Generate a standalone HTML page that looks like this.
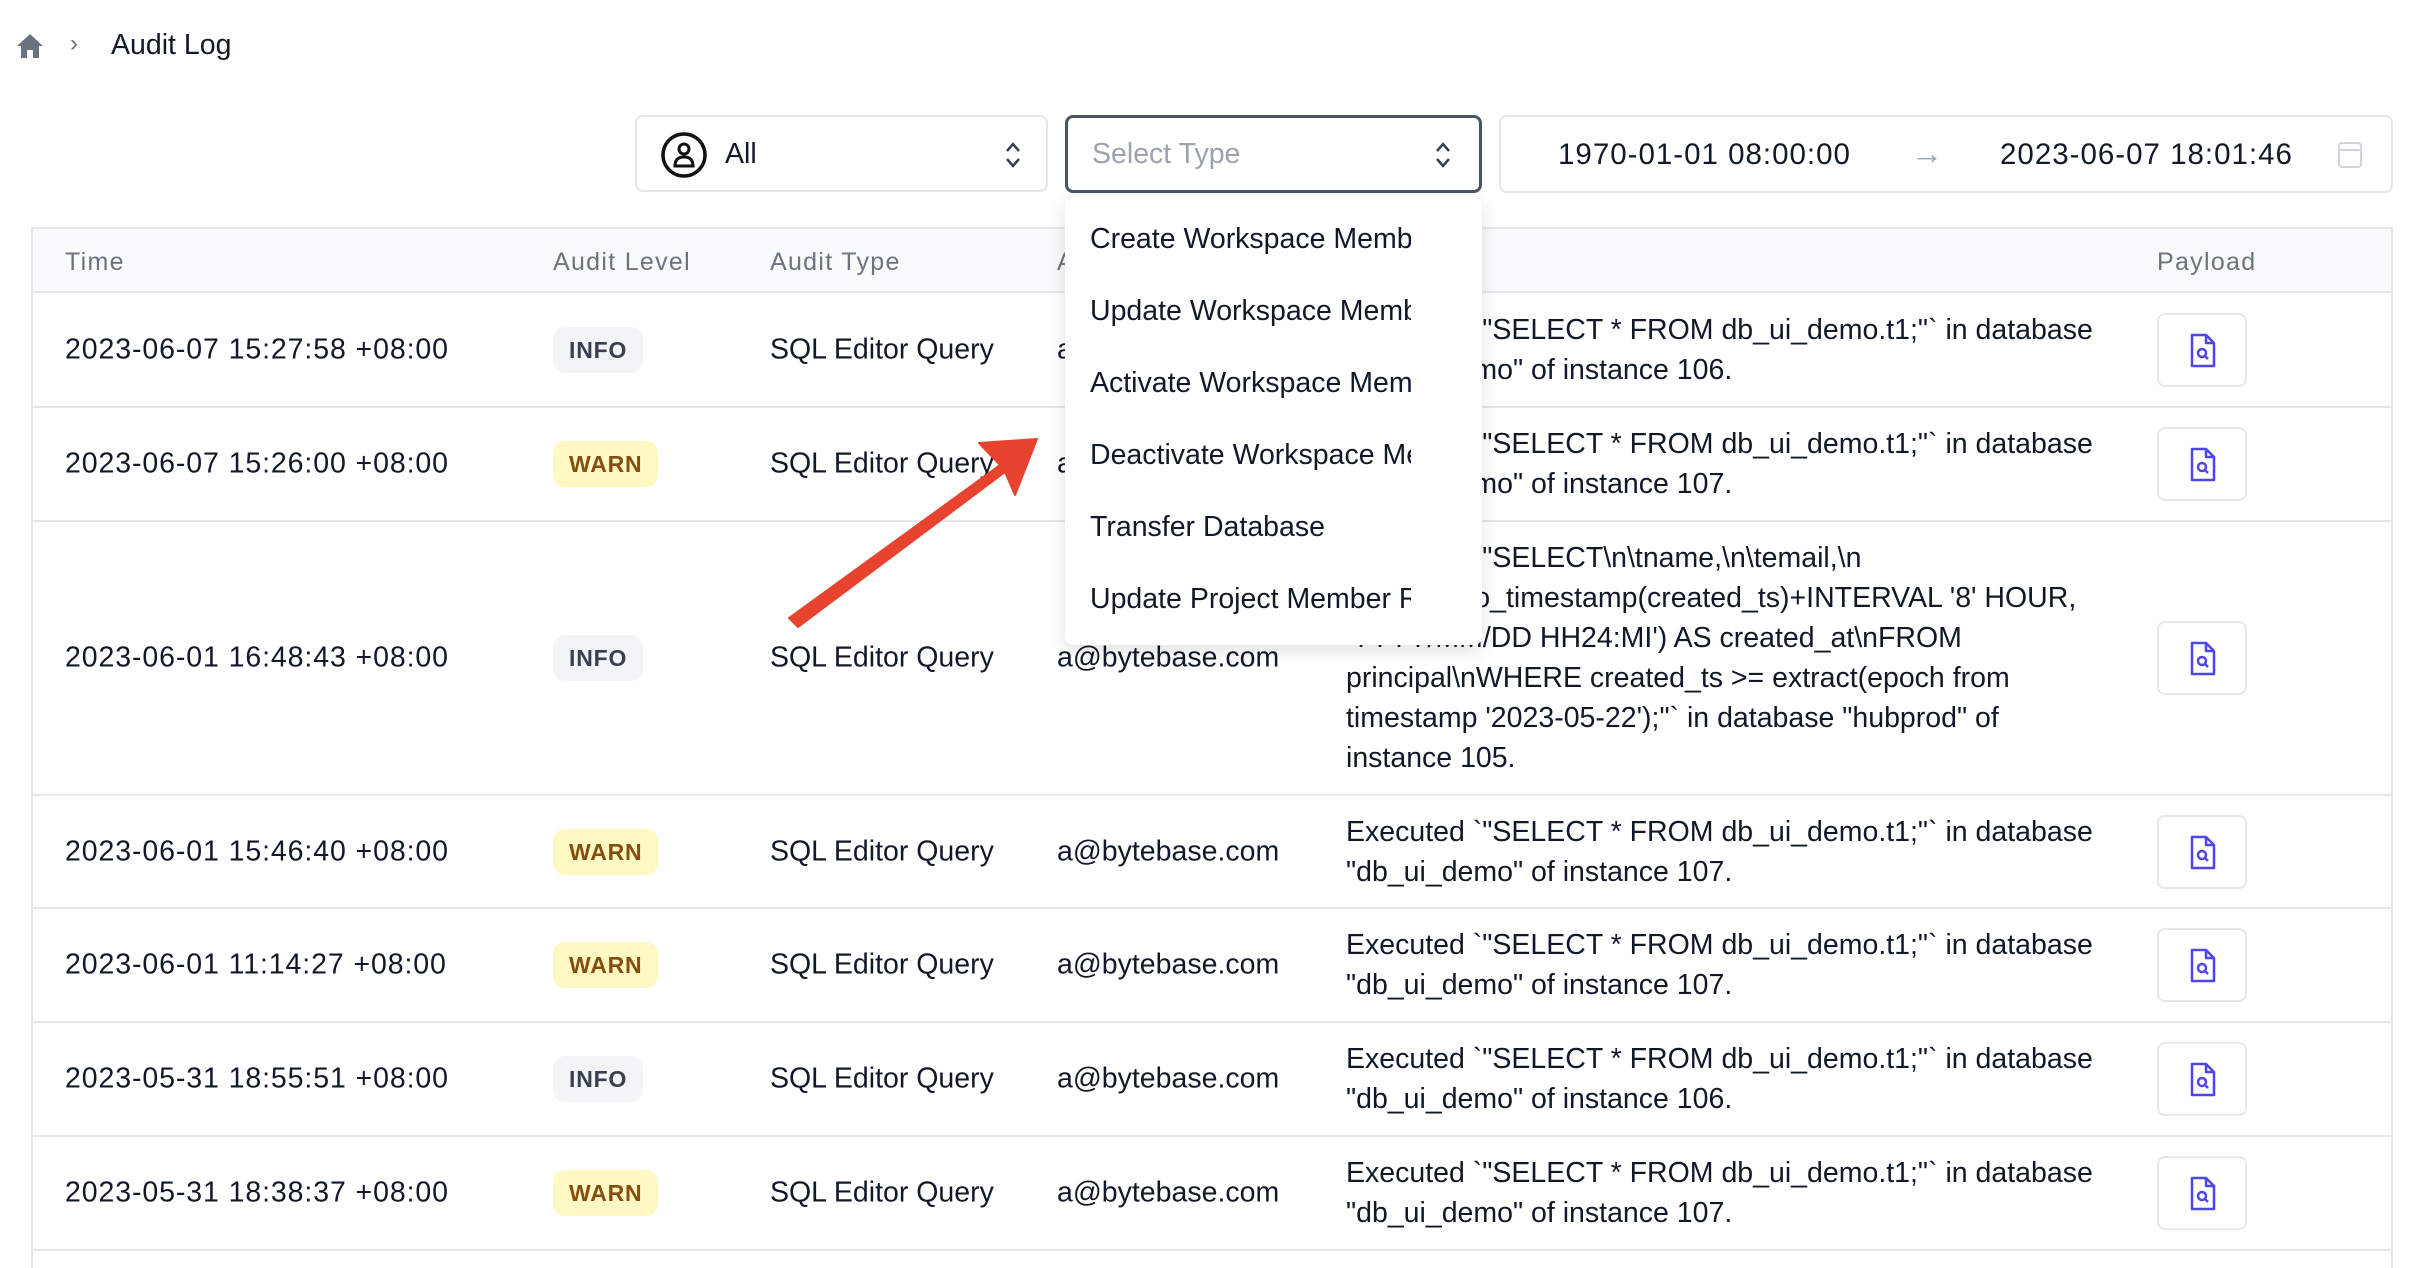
<!DOCTYPE html>
<html><head><meta charset="utf-8"><style>
*{box-sizing:border-box;margin:0;padding:0}
body{width:2410px;height:1268px;background:#fff;font-family:"Liberation Sans",sans-serif;color:#111827;position:relative;overflow:hidden}
.a{position:absolute}
.box{position:absolute;border:2px solid #e5e7eb;border-radius:8px;background:#fff}
.hdr{position:absolute;left:31px;top:227px;width:2362px;height:66px;background:#f9fafb;border-top:2px solid #e5e7eb;border-bottom:2px solid #e5e7eb}
.h{position:absolute;top:19px;font-size:25px;color:#6b7280;letter-spacing:1.3px}
.row{position:absolute;left:31px;width:2362px;border-bottom:2px solid #e5e7eb}
.c{position:absolute;font-size:28.5px;white-space:nowrap;transform:translateY(-50%)}
.t{letter-spacing:0.9px}
.b{position:absolute;transform:translateY(-50%);height:46px;border-radius:12px;font-size:23px;font-weight:bold;line-height:46px;padding:0 16px;letter-spacing:0.8px}
.info{background:#f3f4f6;color:#374151}
.warn{background:#fef9c3;color:#854d0e}
.pb{position:absolute;left:2126px;width:90px;height:74px;border:2px solid #e5e7eb;border-radius:8px;transform:translateY(-50%);background:#fff}
.cm{position:absolute;left:1315px;font-size:28.5px;line-height:40px;white-space:nowrap;transform:translateY(-50%)}
.dd{position:absolute;left:1065px;top:197px;width:417px;height:448px;background:#fff;border-radius:8px;box-shadow:0 6px 18px rgba(0,0,0,0.12);overflow:hidden}
.it{position:absolute;left:25px;width:321px;overflow:hidden;white-space:nowrap;font-size:28.5px;color:#111827}
</style></head><body>
<svg class="a" style="left:16px;top:33px" width="28" height="26" viewBox="0 0 28 26"><path d="M14 1 L27 13 L23 13 L23 25 L17 25 L17 17 L11 17 L11 25 L5 25 L5 13 L1 13 Z" fill="#6b7280"/></svg>
<div class="a" style="left:70px;top:30px;font-size:24px;color:#6b7280">›</div>
<div class="a" style="left:111px;top:29px;font-size:28.5px;color:#111827">Audit Log</div>

<div class="box" style="left:635px;top:115px;width:413px;height:77px">
<svg class="a" style="left:23px;top:14px" width="48" height="48" viewBox="0 0 48 48"><circle cx="24" cy="24" r="21" fill="none" stroke="#111" stroke-width="3.5"/><circle cx="24" cy="18" r="5" fill="none" stroke="#111" stroke-width="3"/><path d="M15 35 Q15 26 24 26 Q33 26 33 35 Z" fill="none" stroke="#111" stroke-width="3"/></svg>
<div class="a" style="left:88px;top:21px;font-size:28.5px">All</div>
<svg class="a" style="left:367px;top:24px" width="18" height="28" viewBox="0 0 18 28"><path d="M3 10 L9 3 L15 10 M3 18 L9 25 L15 18" fill="none" stroke="#374151" stroke-width="2.5"/></svg>
</div>
<div class="box" style="left:1065px;top:115px;width:417px;height:78px;border:3px solid #4b5563">
<div class="a" style="left:24px;top:20px;font-size:28.5px;color:#9ca3af">Select Type</div>
<svg class="a" style="left:366px;top:23px" width="18" height="28" viewBox="0 0 18 28"><path d="M3 10 L9 3 L15 10 M3 18 L9 25 L15 18" fill="none" stroke="#374151" stroke-width="2.5"/></svg>
</div>
<div class="box" style="left:1499px;top:115px;width:894px;height:78px">
<div class="a" style="left:57px;top:21px;font-size:29.5px;letter-spacing:1px">1970-01-01 08:00:00</div>
<div class="a" style="left:410px;top:18px;font-size:32px;color:#9ca3af">→</div>
<div class="a" style="left:499px;top:21px;font-size:29.5px;letter-spacing:1px">2023-06-07 18:01:46</div>
<svg class="a" style="left:836px;top:24px" width="26" height="28" viewBox="0 0 26 28"><rect x="2" y="2" width="22" height="24" rx="3" fill="none" stroke="#d1d5db" stroke-width="2"/><line x1="2" y1="9" x2="24" y2="9" stroke="#d1d5db" stroke-width="2"/></svg>
</div>

<div class="hdr">
<div class="h" style="left:34px">Time</div>
<div class="h" style="left:522px">Audit Level</div>
<div class="h" style="left:739px">Audit Type</div>
<div class="h" style="left:1026px">Actor</div>
<div class="h" style="left:1315px">Comment</div>
<div class="h" style="left:2126px">Payload</div>
</div>

<div class="row" style="top:293px;height:115px">
<div class="c t" style="left:34px;top:57px">2023-06-07 15:27:58 +08:00</div>
<div class="b info" style="left:522px;top:57px">INFO</div>
<div class="c" style="left:739px;top:57px">SQL Editor Query</div>
<div class="c" style="left:1026px;top:57px">a@bytebase.com</div>
<div class="cm" style="top:57px">Executed `"SELECT * FROM db_ui_demo.t1;"` in database<br>"db_ui_demo" of instance 106.</div>
<div class="pb" style="top:57px"><svg class="a" style="left:30px;top:18px" width="28" height="36" viewBox="0 0 28 36"><path d="M3 2 H17 L25 10 V33 H3 Z M17 2 V10 H25" fill="none" stroke="#4f46e5" stroke-width="2.5" stroke-linejoin="round"/><circle cx="13" cy="20" r="4" fill="none" stroke="#4f46e5" stroke-width="2.5"/><line x1="16" y1="23" x2="19" y2="26" stroke="#4f46e5" stroke-width="2.5"/></svg></div>
</div>
<div class="row" style="top:408px;height:114px">
<div class="c t" style="left:34px;top:56px">2023-06-07 15:26:00 +08:00</div>
<div class="b warn" style="left:522px;top:56px">WARN</div>
<div class="c" style="left:739px;top:56px">SQL Editor Query</div>
<div class="c" style="left:1026px;top:56px">a@bytebase.com</div>
<div class="cm" style="top:56px">Executed `"SELECT * FROM db_ui_demo.t1;"` in database<br>"db_ui_demo" of instance 107.</div>
<div class="pb" style="top:56px"><svg class="a" style="left:30px;top:18px" width="28" height="36" viewBox="0 0 28 36"><path d="M3 2 H17 L25 10 V33 H3 Z M17 2 V10 H25" fill="none" stroke="#4f46e5" stroke-width="2.5" stroke-linejoin="round"/><circle cx="13" cy="20" r="4" fill="none" stroke="#4f46e5" stroke-width="2.5"/><line x1="16" y1="23" x2="19" y2="26" stroke="#4f46e5" stroke-width="2.5"/></svg></div>
</div>
<div class="row" style="top:522px;height:274px">
<div class="c t" style="left:34px;top:136px">2023-06-01 16:48:43 +08:00</div>
<div class="b info" style="left:522px;top:136px">INFO</div>
<div class="c" style="left:739px;top:136px">SQL Editor Query</div>
<div class="c" style="left:1026px;top:136px">a@bytebase.com</div>
<div class="cm" style="top:136px">Executed `"SELECT\n\tname,\n\temail,\n<br>\tto_char(to_timestamp(created_ts)+INTERVAL '8' HOUR,<br>'YYYY/MM/DD HH24:MI') AS created_at\nFROM<br>principal\nWHERE created_ts &gt;= extract(epoch from<br>timestamp '2023-05-22');"` in database "hubprod" of<br>instance 105.</div>
<div class="pb" style="top:136px"><svg class="a" style="left:30px;top:18px" width="28" height="36" viewBox="0 0 28 36"><path d="M3 2 H17 L25 10 V33 H3 Z M17 2 V10 H25" fill="none" stroke="#4f46e5" stroke-width="2.5" stroke-linejoin="round"/><circle cx="13" cy="20" r="4" fill="none" stroke="#4f46e5" stroke-width="2.5"/><line x1="16" y1="23" x2="19" y2="26" stroke="#4f46e5" stroke-width="2.5"/></svg></div>
</div>
<div class="row" style="top:796px;height:113px">
<div class="c t" style="left:34px;top:56px">2023-06-01 15:46:40 +08:00</div>
<div class="b warn" style="left:522px;top:56px">WARN</div>
<div class="c" style="left:739px;top:56px">SQL Editor Query</div>
<div class="c" style="left:1026px;top:56px">a@bytebase.com</div>
<div class="cm" style="top:56px">Executed `"SELECT * FROM db_ui_demo.t1;"` in database<br>"db_ui_demo" of instance 107.</div>
<div class="pb" style="top:56px"><svg class="a" style="left:30px;top:18px" width="28" height="36" viewBox="0 0 28 36"><path d="M3 2 H17 L25 10 V33 H3 Z M17 2 V10 H25" fill="none" stroke="#4f46e5" stroke-width="2.5" stroke-linejoin="round"/><circle cx="13" cy="20" r="4" fill="none" stroke="#4f46e5" stroke-width="2.5"/><line x1="16" y1="23" x2="19" y2="26" stroke="#4f46e5" stroke-width="2.5"/></svg></div>
</div>
<div class="row" style="top:909px;height:114px">
<div class="c t" style="left:34px;top:56px">2023-06-01 11:14:27 +08:00</div>
<div class="b warn" style="left:522px;top:56px">WARN</div>
<div class="c" style="left:739px;top:56px">SQL Editor Query</div>
<div class="c" style="left:1026px;top:56px">a@bytebase.com</div>
<div class="cm" style="top:56px">Executed `"SELECT * FROM db_ui_demo.t1;"` in database<br>"db_ui_demo" of instance 107.</div>
<div class="pb" style="top:56px"><svg class="a" style="left:30px;top:18px" width="28" height="36" viewBox="0 0 28 36"><path d="M3 2 H17 L25 10 V33 H3 Z M17 2 V10 H25" fill="none" stroke="#4f46e5" stroke-width="2.5" stroke-linejoin="round"/><circle cx="13" cy="20" r="4" fill="none" stroke="#4f46e5" stroke-width="2.5"/><line x1="16" y1="23" x2="19" y2="26" stroke="#4f46e5" stroke-width="2.5"/></svg></div>
</div>
<div class="row" style="top:1023px;height:114px">
<div class="c t" style="left:34px;top:56px">2023-05-31 18:55:51 +08:00</div>
<div class="b info" style="left:522px;top:56px">INFO</div>
<div class="c" style="left:739px;top:56px">SQL Editor Query</div>
<div class="c" style="left:1026px;top:56px">a@bytebase.com</div>
<div class="cm" style="top:56px">Executed `"SELECT * FROM db_ui_demo.t1;"` in database<br>"db_ui_demo" of instance 106.</div>
<div class="pb" style="top:56px"><svg class="a" style="left:30px;top:18px" width="28" height="36" viewBox="0 0 28 36"><path d="M3 2 H17 L25 10 V33 H3 Z M17 2 V10 H25" fill="none" stroke="#4f46e5" stroke-width="2.5" stroke-linejoin="round"/><circle cx="13" cy="20" r="4" fill="none" stroke="#4f46e5" stroke-width="2.5"/><line x1="16" y1="23" x2="19" y2="26" stroke="#4f46e5" stroke-width="2.5"/></svg></div>
</div>
<div class="row" style="top:1137px;height:114px">
<div class="c t" style="left:34px;top:56px">2023-05-31 18:38:37 +08:00</div>
<div class="b warn" style="left:522px;top:56px">WARN</div>
<div class="c" style="left:739px;top:56px">SQL Editor Query</div>
<div class="c" style="left:1026px;top:56px">a@bytebase.com</div>
<div class="cm" style="top:56px">Executed `"SELECT * FROM db_ui_demo.t1;"` in database<br>"db_ui_demo" of instance 107.</div>
<div class="pb" style="top:56px"><svg class="a" style="left:30px;top:18px" width="28" height="36" viewBox="0 0 28 36"><path d="M3 2 H17 L25 10 V33 H3 Z M17 2 V10 H25" fill="none" stroke="#4f46e5" stroke-width="2.5" stroke-linejoin="round"/><circle cx="13" cy="20" r="4" fill="none" stroke="#4f46e5" stroke-width="2.5"/><line x1="16" y1="23" x2="19" y2="26" stroke="#4f46e5" stroke-width="2.5"/></svg></div>
</div>
<div class="a" style="left:31px;top:227px;width:2px;height:1041px;background:#e5e7eb"></div>
<div class="a" style="left:2391px;top:227px;width:2px;height:1041px;background:#e5e7eb"></div>

<div class="dd">
<div class="it" style="top:26px">Create Workspace Member</div>
<div class="it" style="top:98px">Update Workspace Member</div>
<div class="it" style="top:170px">Activate Workspace Member</div>
<div class="it" style="top:242px">Deactivate Workspace Member</div>
<div class="it" style="top:314px">Transfer Database</div>
<div class="it" style="top:386px">Update Project Member Role</div>
</div>

<svg class="a" style="left:0;top:0" width="2410" height="1268" viewBox="0 0 2410 1268">
<path d="M789 618 L1000 465 L979 443 L1037 439 L1015 495 L1005 472 L798 627 Z" fill="#e8432e" stroke="#e8432e" stroke-width="2" stroke-linejoin="round"/>
</svg>
</body></html>
